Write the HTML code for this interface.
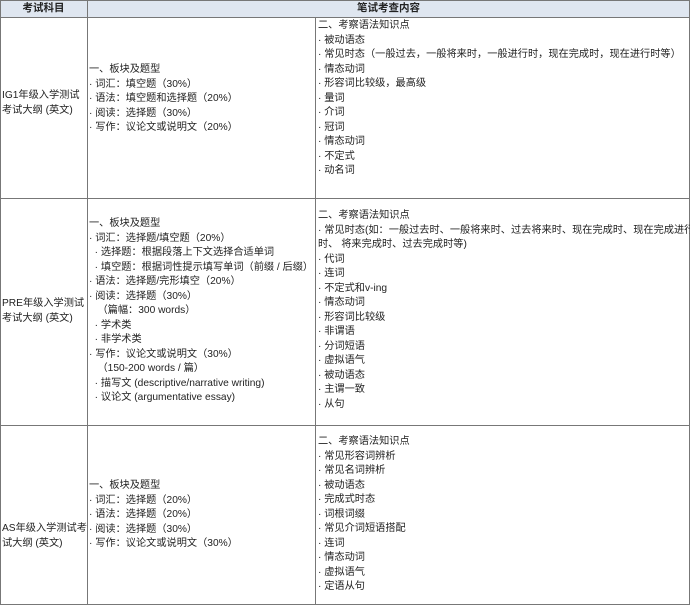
<!DOCTYPE html>
<html><head><meta charset="utf-8"><style>
body{margin:0;width:690px;height:605px;background:#fff;position:relative;overflow:hidden;font-family:"Liberation Sans","Noto Sans CJK SC",sans-serif;font-size:10.2px;color:#222;}
.l{position:absolute;background:#777;}
.t{position:absolute;line-height:14.5px;white-space:pre;}
.h{position:absolute;font-weight:bold;font-size:10.5px;line-height:17px;text-align:center;}
</style></head><body>
<div style="position:absolute;left:0;top:0;width:690px;height:17px;background:#dfe6f0"></div>
<div class="h" style="left:0;top:0;width:87px">考试科目</div>
<div class="h" style="left:87px;top:0;width:603px">笔试考查内容</div>
<div class="l" style="left:0;top:0;width:690px;height:1px"></div>
<div class="l" style="left:0;top:17px;width:690px;height:1px"></div>
<div class="l" style="left:0;top:198px;width:690px;height:1px"></div>
<div class="l" style="left:0;top:425px;width:690px;height:1px"></div>
<div class="l" style="left:0;top:604px;width:690px;height:1px"></div>
<div class="l" style="left:0;top:0;width:1px;height:605px"></div>
<div class="l" style="left:87px;top:0;width:1px;height:605px"></div>
<div class="l" style="left:315px;top:17px;width:1px;height:588px"></div>
<div class="l" style="left:689px;top:0;width:1px;height:605px"></div>

<div class="t" style="left:2px;top:89px">IG1年级入学测试
考试大纲 (英文)</div>
<div class="t" style="left:89px;top:63px">一、板块及题型
· 词汇：填空题（30%）
· 语法：填空题和选择题（20%）
· 阅读：选择题（30%）
· 写作：议论文或说明文（20%）</div>
<div class="t" style="left:318px;top:19px">二、考察语法知识点
· 被动语态
· 常见时态（一般过去，一般将来时，一般进行时，现在完成时，现在进行时等）
· 情态动词
· 形容词比较级，最高级
· 量词
· 介词
· 冠词
· 情态动词
· 不定式
· 动名词</div>

<div class="t" style="left:2px;top:297px">PRE年级入学测试
考试大纲 (英文)</div>
<div class="t" style="left:89px;top:217px">一、板块及题型
· 词汇：选择题/填空题（20%）
  · 选择题：根据段落上下文选择合适单词
  · 填空题：根据词性提示填写单词（前缀 / 后缀）
· 语法：选择题/完形填空（20%）
· 阅读：选择题（30%）
   （篇幅：300 words）
  · 学术类
  · 非学术类
· 写作：议论文或说明文（30%）
   （150-200 words / 篇）
  · 描写文 (descriptive/narrative writing)
  · 议论文 (argumentative essay)</div>
<div class="t" style="left:318px;top:209px">二、考察语法知识点
· 常见时态(如：一般过去时、一般将来时、过去将来时、现在完成时、现在完成进行
时、 将来完成时、过去完成时等)
· 代词
· 连词
· 不定式和v-ing
· 情态动词
· 形容词比较级
· 非谓语
· 分词短语
· 虚拟语气
· 被动语态
· 主谓一致
· 从句</div>

<div class="t" style="left:2px;top:522px">AS年级入学测试考
试大纲 (英文)</div>
<div class="t" style="left:89px;top:479px">一、板块及题型
· 词汇：选择题（20%）
· 语法：选择题（20%）
· 阅读：选择题（30%）
· 写作：议论文或说明文（30%）</div>
<div class="t" style="left:318px;top:435px">二、考察语法知识点
· 常见形容词辨析
· 常见名词辨析
· 被动语态
· 完成式时态
· 词根词缀
· 常见介词短语搭配
· 连词
· 情态动词
· 虚拟语气
· 定语从句</div>
</body></html>
